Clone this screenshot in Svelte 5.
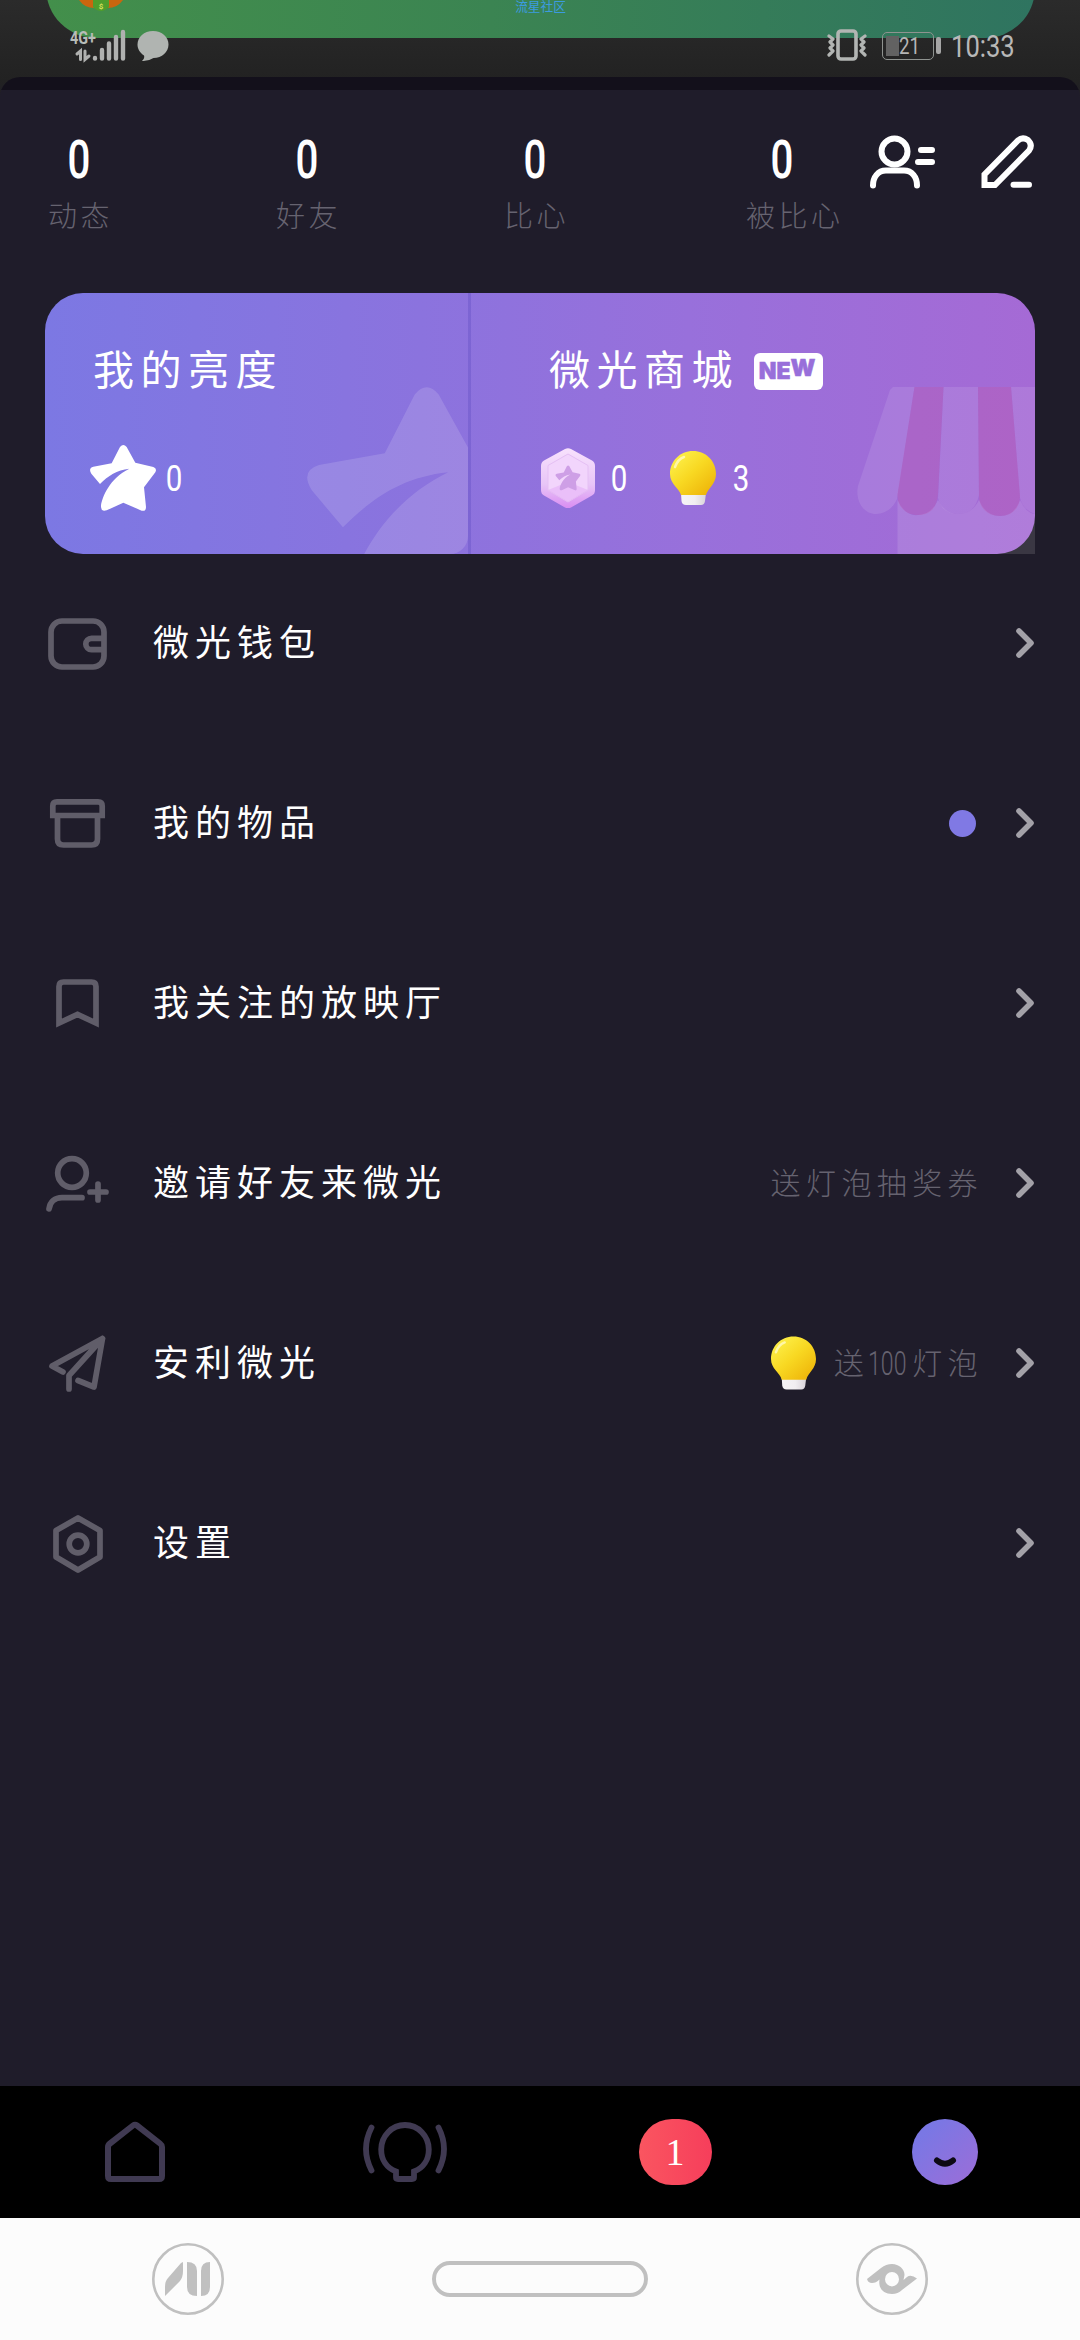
<script>
  const stats = [
    { value: 0, label: '动态' },
    { value: 0, label: '好友' },
    { value: 0, label: '比心' },
    { value: 0, label: '被比心' },
  ];
  const rows = [
    { icon: 'wallet', label: '微光钱包' },
    { icon: 'box', label: '我的物品', dot: true },
    { icon: 'bookmark', label: '我关注的放映厅' },
    { icon: 'invite', label: '邀请好友来微光', hint: ['送灯泡抽奖券'] },
    { icon: 'plane', label: '安利微光', hint: ['送', '100', '灯泡'], bulb: true },
    { icon: 'settings', label: '设置' },
  ];
  const star =
    'M90 6Q100-6 110 6L136 53L190 66Q202 70 196 82L162 127L168 186Q168 200 155 197L100 173L50 196Q32 202 33 182C36 158 58 100 118 71C80 75 55 92 30 117L4 86Q-6 70 10 65L65 55Z';
</script>

{#snippet bulb()}
  <svg class="bulb" viewBox="0 0 46 54">
    <defs>
      <linearGradient id="bulb-fill" x1="0.1" y1="0.1" x2="0.85" y2="0.9">
        <stop offset="0" stop-color="#fdf04a" />
        <stop offset="0.5" stop-color="#f8d822" />
        <stop offset="1" stop-color="#efb80c" />
      </linearGradient>
      <linearGradient id="bulb-base">
        <stop offset="0" stop-color="#f6f4f6" />
        <stop offset="0.55" stop-color="#f1eef1" />
        <stop offset="1" stop-color="#d9d3d9" />
      </linearGradient>
    </defs>
    <path d="M11 42H36L35 50Q34.500 54 31 54H16Q12 54 11.500 50Z" fill="url(#bulb-base)" />
    <path d="M23 0C36 0 46 10 46 23C46 33 38 37 36 44H11C9 37 0 33 0 23C0 10 10 0 23 0Z" fill="url(#bulb-fill)" />
    <path d="M5 16Q8 8 14 6" fill="none" stroke="#fff7a8" stroke-width="2.500" stroke-linecap="round" />
  </svg>
{/snippet}

<div class="screen">
  <header class="status">
    <div class="notice">
      <svg class="coin" viewBox="0 0 44 12">
        <path d="M0 0H44Q36 11 22 7Q8 11 0 0Z" fill="#c9660f" />
        <path d="M14 0H30V7Q22 15 14 7Z" fill="#4f9d2c" />
        <text x="22" y="8.500" text-anchor="middle">$</text>
      </svg>
      <span class="community">流星社区</span>
    </div>
    <div class="status-left">
      <svg width="58" height="36" viewBox="68 27 58 36">
        <text x="70" y="44" class="net" textLength="26" lengthAdjust="spacingAndGlyphs">4G+</text>
        <g stroke="#b0b1b0" stroke-linecap="round" fill="none">
          <path d="M77 54L80.500 51V59.500M85 51V59.500L89 56" stroke-width="3" />
          <path d="M95 58V58.500M102 50V58.500M109 43.500V58.500M116 37V58.500M123 32V58.500" stroke-width="4.400" />
        </g>
      </svg>
      <svg width="32" height="32" viewBox="0 0 32 32">
        <path d="M16 1C25 1 31.500 7 31.500 14.500C31.500 22 25 28 16.500 28Q11 31.500 5 31Q8 28 7 25.500C3 23 .5 19 .5 14.500C.5 7 7 1 16 1Z" fill="#b0b4b1" />
      </svg>
    </div>
    <div class="status-right">
      <svg width="40" height="34" viewBox="0 0 40 34" fill="none" stroke="#b2b5b3">
        <rect x="11" y="3" width="18" height="28" rx="3" stroke-width="3.600" />
        <path d="M2 8L6 11L3 14L6 17L3 20L6 23L2 27M38 8L34 11L37 14L34 17L37 20L34 23L38 27" stroke-width="3.200" stroke-linejoin="round" stroke-linecap="round" />
      </svg>
      <div class="battery"><i></i><span>21</span></div>
      <time>10:33</time>
    </div>
  </header>

  <main>
    <section class="profile">
      {#each stats as s}
        <div class="stat"><b>{s.value}</b><span>{s.label}</span></div>
      {/each}
      <div class="actions">
        <svg width="66" height="54" viewBox="869 135 66 54" fill="none" stroke="#fff" stroke-width="6" stroke-linecap="round">
          <ellipse cx="894.500" cy="151.500" rx="13" ry="13" />
          <path d="M873 185.500C873 177 878 170.500 886 170.500H904C912 170.500 917 177 917 185.500M921 150H932M918 162H932" />
        </svg>
        <svg width="54" height="54" viewBox="981 135 54 54" fill="none" stroke="#fff" stroke-width="6">
          <path d="M984.500 185V174.500L1018 140.500Q1022.500 136.500 1028 140Q1033 145 1029 150.500L995 185Z" />
          <path d="M1013.500 184.700H1029" stroke-linecap="round" />
        </svg>
      </div>
    </section>

    <section class="card">
      <svg class="star-mark" viewBox="0 0 134.500 139"><path d={star} fill="#fff" fill-opacity="0.140" /></svg>
      <svg class="shop-mark" viewBox="855 387 180 167">
        <path d="M897.500 500Q906 517 918 515Q932 514 938 500Q945 514 958 514Q972 514 979 500Q986 516 1000 516Q1014 516 1020 500Q1026 513 1035 514V554H897.500Z" fill="#fff" fill-opacity="0.120" />
        <path d="M893 387Q890 389 889 393L858 486C855 500 863 514 876 514Q891 513 897 499L914.500 387Z" fill="#fff" fill-opacity="0.100" />
        <path d="M943.500 387H978L979 495Q975 514 958 514Q942 514 938 498ZM1011 387H1035V514Q1023 510 1020 498Z" fill="#fff" fill-opacity="0.100" />
        <path d="M914.500 387H943.500L938 494C937 508 930 515 918 515C906 515 897 507 897.500 494ZM978 387H1011L1020 496C1020 508 1012 516 1000 516C988 516 979 508 979 496Z" fill="#c8509a" fill-opacity="0.250" />
      </svg>
      <div class="half brightness">
        <h2>我的亮度</h2>
        <div class="counts">
          <svg class="star" viewBox="0 0 198 198"><path d={star} fill="#fff" /></svg>
          <span class="num">0</span>
        </div>
      </div>
      <div class="half shop">
        <h2>微光商城 <em><i>N</i><i>E</i><i class="up">W</i></em></h2>
        <div class="counts">
          <svg class="gem" viewBox="0 0 54 60">
            <defs>
              <linearGradient id="gem-fill" x2="0" y2="1">
                <stop offset="0" stop-color="#f8e2fd" />
                <stop offset="0.600" stop-color="#e8c5f7" />
                <stop offset="1" stop-color="#d98df2" />
              </linearGradient>
            </defs>
            <path d="M24 1Q27-.5 30 1L51 12.500Q54 14 54 18V42Q54 46 51 47.500L30 59.500Q27 61 24 59.500L3 47.500Q0 46 0 42V18Q0 14 3 12.500Z" fill="url(#gem-fill)" />
            <path d="M27 6L47 17.500V42L27 54L7 42V17.500Z" fill="#f2d5fc" stroke="#e5c0f4" />
            <path d="M7 42L27 34L47 42L27 54Z" fill="#e5b0f7" fill-opacity="0.600" />
            <g transform="translate(14.500 17.500) scale(.126)"><path d={star} fill="#ce9fe6" /></g>
          </svg>
          <span class="num">0</span>
          {@render bulb()}
          <span class="num">3</span>
        </div>
      </div>
    </section>

    <nav class="menu">
      {#each rows as r}
        <div class="row">
          <svg class="row-icon" viewBox="0 0 72 72" fill="none" stroke="#605d69" stroke-width="5.700">
            {#if r.icon === 'wallet'}
              <rect x="9" y="14" width="53" height="46" rx="11" />
              <path d="M61 31.300H49.500a5.700 5.700 0 0 0 0 11.400H61" />
            {:else if r.icon === 'box'}
              <path d="M10.800 28.500V19Q10.800 14.800 15 14.800H56Q60.200 14.800 60.200 19V28.500ZM15.500 28.500V52Q15.500 58 21.500 58H49.500Q55.500 58 55.500 52V28.500" />
            {:else if r.icon === 'bookmark'}
              <path d="M17 56V19.500Q17 15 21.500 15H49.500Q54 15 54 19.500V56L35.500 47.500Z" />
            {:else if r.icon === 'invite'}
              <circle cx="30" cy="26" r="14.300" />
              <path d="M7 62C8 54.500 13 50.700 20 50.700H40M48 45H64M56 37V53" stroke-linecap="round" />
            {:else if r.icon === 'plane'}
              <path d="M21 45L10 39L60.500 11.500L52 60L36 53.500M60.500 11.500L27 48.500V62" stroke-linecap="round" stroke-linejoin="round" />
            {:else}
              <path d="M36 11L58 23.500V50L36 63L14 50V23.500Z" stroke-linejoin="round" />
              <circle cx="36" cy="37" r="8.800" />
            {/if}
          </svg>
          <span class="row-label">{r.label}</span>
          {#if r.dot}<i class="dot"></i>{/if}
          {#if r.bulb}{@render bulb()}{/if}
          {#if r.hint}
            <span class="hint">{#each r.hint as part}<span class:amount={part === '100'}>{part}</span>{/each}</span>
          {/if}
          <svg class="chevron" viewBox="0 0 18 30"><path d="M3 3L15 15L3 27" fill="none" stroke="#a3a1a8" stroke-width="5.600" stroke-linecap="round" stroke-linejoin="round" /></svg>
        </div>
      {/each}
    </nav>
  </main>

  <footer class="tabs">
    <div>
      <svg width="60" height="62" viewBox="105 2121 60 62" fill="none" stroke="#403a52" stroke-width="6" stroke-linejoin="round">
        <path d="M108 2147Q108 2145 110 2143.500L133 2125.500Q135 2124 137 2125.500L160 2143.500Q162 2145 162 2147V2176Q162 2179 159 2179H111Q108 2179 108 2176Z" />
      </svg>
    </div>
    <div>
      <svg width="86" height="62" viewBox="362 2121 86 62" fill="none" stroke="#403a52" stroke-width="5.800" stroke-linecap="round">
        <path d="M396 2177.500V2171.500C387 2168 381.200 2160 381.200 2149.500A23.800 24.500 0 0 1 428.800 2149.500C428.800 2160 423 2168 414 2171.500V2177.500Q414 2179 412 2179H398Q396 2179 396 2177.500Z" />
        <path d="M371.500 2127.500Q360.500 2149 371.500 2170.500M438.500 2127.500Q449.500 2149 438.500 2170.500" />
      </svg>
    </div>
    <div><span class="badge">1</span></div>
    <div>
      <span class="face">
        <svg viewBox="0 0 66 66"><path d="M25 41.500Q33 48 41 41.500" fill="none" stroke="#0d0a14" stroke-width="6" stroke-linecap="round" /></svg>
      </span>
    </div>
  </footer>

  <footer class="system">
    <svg width="72" height="72" viewBox="152 2243 72 72" fill="#c0c0c0">
      <circle cx="188" cy="2279" r="34.700" fill="none" stroke="#c0c0c0" stroke-width="2.600" />
      <path d="M183 2262V2271Q183 2277 180 2281L165 2296V2287Q165 2281 168 2278L181 2263ZM187 2262Q197 2262 197 2271V2296Q187 2296 187 2287ZM210 2262V2287Q210 2296 201 2296V2271Q201 2262 210 2262Z" />
    </svg>
    <div class="home-pill"></div>
    <svg width="72" height="72" viewBox="856 2243 72 72" fill="#c0c0c0">
      <circle cx="892" cy="2279" r="34.700" fill="none" stroke="#c0c0c0" stroke-width="2.600" />
      <path fill-rule="evenodd" d="M867 2279L881 2268Q886 2264 892 2264C899 2264 904.500 2269 904.500 2275L903.500 2280L907 2277Q911 2274 917 2278.500L902 2290Q898 2294 892 2294C884 2294 878 2289 879.500 2279.500Q876 2283 872 2283Q868 2283 867 2279ZM885 2279.200a7 7.200 0 1 0 14 0a7 7.200 0 1 0 -14 0Z" />
    </svg>
  </footer>
</div>

<style>
  :global(body) {
    margin: 0;
    background: #1f1c2a;
  }
  .screen {
    width: 1080px;
    height: 2340px;
    display: flex;
    flex-direction: column;
    overflow: hidden;
    background: linear-gradient(#2b2b2b, #222 80px, #1f1c2a 110px);
    font-family: Roboto, 'Noto Sans CJK SC', sans-serif;
    color: #fff;
  }
  .screen * {
    box-sizing: border-box;
  }
  svg {
    display: block;
    flex: none;
  }
  i {
    font-style: normal;
  }

  .status {
    position: relative;
    height: 77px;
    flex: none;
    display: flex;
    justify-content: space-between;
    padding: 27px 66px 0 68px;
  }
  .notice {
    position: absolute;
    left: 46px;
    top: -62px;
    width: 989px;
    height: 100px;
    border-radius: 50px;
    background: linear-gradient(90deg, #438f4b, #3b8452 45%, #2f7460);
    padding-top: 62px;
  }
  .coin {
    position: absolute;
    left: 33px;
    top: 62px;
    width: 44px;
    height: 12px;
  }
  .coin text {
    font-size: 8px;
    font-weight: 700;
    fill: #d8e05a;
  }
  .community {
    display: block;
    text-align: center;
    font-size: 12.7px;
    line-height: 13px;
    color: #3c9be0;
  }
  .status-left,
  .status-right {
    position: relative;
    display: flex;
    align-items: flex-start;
  }
  .status-left {
    gap: 11px;
  }
  .status-left svg + svg {
    margin-top: 3px;
  }
  .net {
    font-size: 19px;
    font-weight: 700;
    fill: #b7bcb8;
  }
  .status-right svg {
    margin-top: 1px;
  }
  .battery {
    position: relative;
    width: 52px;
    height: 28px;
    margin: 5px 0 0 15px;
    padding: 3px;
    border: 1.500px solid #8f9390;
    border-radius: 5px;
    display: flex;
    align-items: center;
  }
  .battery::after {
    content: '';
    position: absolute;
    right: -8px;
    top: 4px;
    width: 5px;
    height: 17px;
    border-radius: 2px;
    background: #a6a6a6;
  }
  .battery i {
    width: 13px;
    height: 20px;
    flex: none;
    background: #626262;
  }
  .battery span {
    font-size: 24px;
    line-height: 20px;
    color: #b5b5b5;
    transform: scaleX(0.78);
    transform-origin: left;
  }
  time {
    width: 63px;
    margin: 3px 0 0 17px;
    font-size: 32px;
    line-height: 32px;
    color: #b8b8b8;
    transform: scaleX(0.8);
    transform-origin: left;
  }

  main {
    flex: 1;
    border-radius: 20px 20px 0 0;
    background: linear-gradient(#13101b 13px, #1f1c2a 13px);
    padding-top: 13px;
  }
  .profile {
    position: relative;
    height: 203px;
    padding: 42px 0 0 46px;
    display: flex;
  }
  .stat {
    width: 228px;
    display: flex;
    flex-direction: column;
    align-items: flex-start;
  }
  .stat:nth-child(4) {
    width: 140px;
    margin-left: 14px;
  }
  .stat b {
    width: 66px;
    text-align: center;
    font-size: 53px;
    line-height: 56px;
    font-weight: 500;
    transform: scaleX(0.76);
  }
  .stat:nth-child(4) b {
    width: 76px;
    margin-left: 2px;
  }
  .stat span {
    margin: 8px 0 0 2px;
    font-size: 29px;
    line-height: 42px;
    letter-spacing: 3.5px;
    font-weight: 300;
    color: #666370;
    white-space: nowrap;
  }
  .stat:nth-child(4) b {
    margin-left: 0;
  }
  .actions {
    position: absolute;
    right: 45px;
    top: 45px;
    display: flex;
    gap: 46px;
  }

  .card {
    position: relative;
    width: 990px;
    height: 261px;
    margin-left: 45px;
    border-radius: 38px;
    display: flex;
    background: linear-gradient(90deg, #7c78e3, #8b73de 38%, #9870db 65%, #a56ad5);
  }
  .half {
    position: relative;
    padding-top: 51px;
  }
  .brightness {
    width: 426px;
    padding-left: 48px;
    border-right: 3px solid rgba(90, 70, 190, 0.32);
  }
  .shop {
    flex: 1;
    padding-left: 78px;
  }
  .star-mark,
  .shop-mark {
    position: absolute;
    bottom: 0;
  }
  .star-mark {
    left: 262px;
    width: 161px;
    height: 167px;
    border-bottom-right-radius: 18px;
    overflow: hidden;
  }
  .shop-mark {
    right: 0;
    width: 180px;
    height: 167px;
  }
  h2 {
    margin: 0;
    height: 54px;
    display: flex;
    align-items: center;
    font-size: 41px;
    line-height: 54px;
    font-weight: 400;
    letter-spacing: 6.5px;
    white-space: pre;
  }
  h2 em {
    display: flex;
    width: 69px;
    height: 37px;
    margin-left: -2px;
    padding: 9px 0 0 5px;
    border-radius: 6px;
    background: #fff;
    color: #986fda;
    font: 900 23px/19px Inter, Roboto, sans-serif;
    letter-spacing: 0;
  }
  h2 em i {
    -webkit-text-stroke: 0.5px #986fda;
  }
  h2 em .up {
    transform: translateY(-3px);
  }
  .counts {
    display: flex;
    align-items: center;
    height: 66px;
    margin-top: 47px;
  }
  .brightness .counts {
    margin-left: -3px;
  }
  .star {
    width: 66px;
    height: 66px;
  }
  .num {
    width: 16px;
    display: flex;
    justify-content: center;
    font-size: 36px;
    line-height: 40px;
    transform: scaleX(0.82);
    margin: 2px 0 0 10px;
  }
  .shop .counts {
    margin-left: -8px;
  }
  .gem {
    width: 54px;
    height: 60px;
  }
  .shop .num {
    margin-left: 16px;
  }
  .bulb {
    width: 46px;
    height: 54px;
  }
  .shop .bulb {
    margin-left: 43px;
  }
  .shop .bulb + .num {
    margin-left: 17px;
  }

  .menu {
    margin-top: -1px;
  }
  .row {
    height: 180px;
    padding: 0 46px 0 42px;
    display: flex;
    align-items: center;
  }
  .row-icon {
    width: 72px;
    height: 72px;
  }
  .row-label {
    margin: 1px auto 0 39px;
    font-size: 36px;
    line-height: 54px;
    letter-spacing: 6px;
  }
  .dot {
    width: 27px;
    height: 27px;
    border-radius: 50%;
    background: #8079e4;
    margin-right: 2px;
  }
  .hint {
    display: flex;
    margin: 1px -5px 0 0;
    font-size: 30px;
    line-height: 46px;
    letter-spacing: 5.4px;
    font-weight: 300;
    color: #666370;
  }
  .row .bulb {
    width: 45px;
    margin-right: 18px;
  }
  .hint .amount {
    width: 39px;
    margin-right: 5px;
    margin-left: -1px;
    font-size: 33px;
    letter-spacing: 0;
    transform: scaleX(0.7);
    transform-origin: left;
  }
  .chevron {
    width: 18px;
    height: 30px;
    margin-left: 38px;
  }

  .tabs {
    height: 132px;
    flex: none;
    background: #000;
    display: grid;
    grid-template-columns: repeat(4, 1fr);
    place-items: center;
  }
  .badge {
    display: block;
    width: 73px;
    height: 66px;
    border-radius: 33px;
    background: linear-gradient(90deg, #fa5560, #f63e5b);
    text-align: center;
    font: 38px/66px 'Liberation Serif', serif;
  }
  .face {
    display: block;
    width: 66px;
    height: 66px;
    border-radius: 50%;
    background: linear-gradient(135deg, #7a77e4 20%, #966fda 85%);
  }
  .system {
    height: 122px;
    flex: none;
    padding: 0 152px;
    background: #fcfcfc;
    display: flex;
    align-items: center;
    justify-content: space-between;
  }
  .home-pill {
    width: 216px;
    height: 36px;
    border: 4.500px solid #c0c0c0;
    border-radius: 18px;
  }
</style>
